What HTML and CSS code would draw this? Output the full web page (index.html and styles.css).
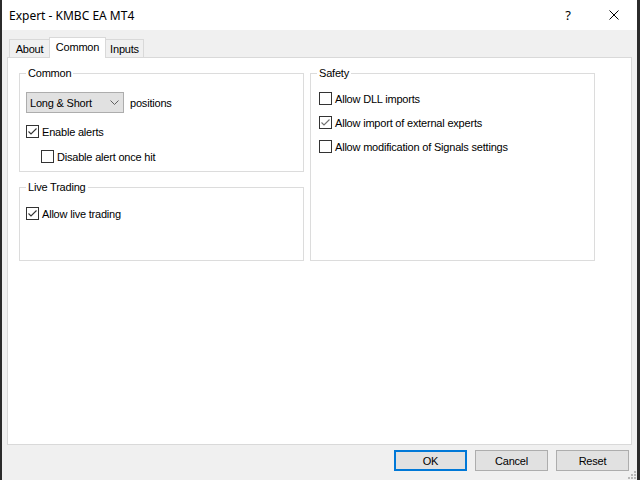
FILE: index.html
```html
<!DOCTYPE html>
<html lang="en">
<head>
    <meta charset="UTF-8">
    <title>Expert - KMBC EA MT4</title>
    <link rel="stylesheet" href="styles.css">
</head>
<body>
    <div class="window">
        <header class="titlebar">
            <span class="title">Expert - KMBC EA MT4</span>
            <span class="tb-btn tb-help">?</span>
            <span class="tb-btn tb-close">
                <svg width="10" height="10" viewBox="0 0 10 10"><path d="M0.5 0.5 L9.5 9.5 M9.5 0.5 L0.5 9.5" stroke="#000" stroke-width="1" fill="none"/></svg>
            </span>
        </header>
        <div class="client">
            <div class="tabs">
                <div class="tab tab-about">About</div>
                <div class="tab tab-common active">Common</div>
                <div class="tab tab-inputs">Inputs</div>
            </div>
            <div class="panel">
                <div class="groups">
                    <fieldset class="group g-common">
                        <legend>Common</legend>
                        <div class="combo-row">
                            <div class="combo">
                                <span>Long &amp; Short</span>
                                <svg class="chev" width="9" height="5" viewBox="0 0 9 5"><path d="M0.5 0.5 L4.5 4.5 L8.5 0.5" stroke="#606060" fill="none"/></svg>
                            </div>
                            <span class="combo-label">positions</span>
                        </div>
                        <label class="check first on"><span class="box"><svg width="11" height="11" viewBox="0 0 11 11"><path d="M1.5 5.5 L4 8 L9.5 2.5" stroke="#333" stroke-width="1.1" fill="none"/></svg></span>Enable alerts</label>
                        <label class="check sub"><span class="box"></span>Disable alert once hit</label>
                    </fieldset>

                    <fieldset class="group g-live">
                        <legend>Live Trading</legend>
                        <label class="check live on"><span class="box"><svg width="11" height="11" viewBox="0 0 11 11"><path d="M1.5 5.5 L4 8 L9.5 2.5" stroke="#333" stroke-width="1.1" fill="none"/></svg></span>Allow live trading</label>
                    </fieldset>

                    <fieldset class="group g-safety">
                        <legend>Safety</legend>
                        <label class="check first"><span class="box"></span>Allow DLL imports</label>
                        <label class="check"><span class="box"><svg width="11" height="11" viewBox="0 0 11 11"><path d="M1.5 5.5 L4 8 L9.5 2.5" stroke="#707070" stroke-width="1.1" fill="none"/></svg></span>Allow import of external experts</label>
                        <label class="check"><span class="box"></span>Allow modification of Signals settings</label>
                    </fieldset>
                </div>
            </div>
            <div class="buttons">
                <button class="btn default">OK</button>
                <button class="btn">Cancel</button>
                <button class="btn">Reset</button>
            </div>
        </div>
        <!-- size grip -->
        <svg class="grip" width="8" height="8" viewBox="0 0 8 8">
            <rect x="6" y="0" width="2" height="2" fill="#b8b8b8"/>
            <rect x="3" y="3" width="2" height="2" fill="#b8b8b8"/>
            <rect x="6" y="3" width="2" height="2" fill="#b8b8b8"/>
            <rect x="0" y="6" width="2" height="2" fill="#b8b8b8"/>
            <rect x="3" y="6" width="2" height="2" fill="#b8b8b8"/>
            <rect x="6" y="6" width="2" height="2" fill="#b8b8b8"/>
        </svg>
    </div>
</body>
</html>
```

FILE: styles.css
```css
body {
    margin: 0;
    background: #2b2b2b;
    font-family: "Liberation Sans", Arial, sans-serif;
    font-size: 11px;
    letter-spacing: -0.2px;
    color: #000;
}
.window {
    position: relative;
    width: 635px;
    height: 480px;
    margin-left: 2px;
    background: #f0f0f0;
    display: flex;
    flex-direction: column;
}
.titlebar {
    height: 30px;
    background: #fff;
    display: flex;
    align-items: center;
    padding-left: 7px;
    font-family: "Noto Sans", "Open Sans", sans-serif;
    font-size: 12px;
    letter-spacing: 0;
}
.title {
    flex: 1;
}
.tb-btn {
    width: 46px;
    height: 30px;
    display: flex;
    align-items: center;
    justify-content: center;
}
.tb-help {
    font-size: 13px;
}
.client {
    padding: 7px 5px 0 5px;
    display: flex;
    flex-direction: column;
}

/* tab strip */
.tabs {
    display: flex;
    align-items: flex-start;
    height: 21px;
    margin-bottom: -1px;
    padding-left: 2px;
    position: relative;
    z-index: 1;
}
.tab {
    box-sizing: border-box;
    height: 18px;
    margin-top: 2px;
    border: 1px solid #d9d9d9;
    border-bottom: none;
    background: #f0f0f0;
    display: flex;
    align-items: center;
    justify-content: center;
    padding-top: 1px;
}
.tab + .tab {
    margin-left: -1px;
}
.tab-about { width: 41px; }
.tab-common { width: 57px; }
.tab-inputs { width: 39px; }
.tab.active {
    height: 21px;
    margin-top: 0;
    background: #fff;
    padding-top: 0;
    padding-bottom: 2px;
    position: relative;
    z-index: 2;
}
.panel {
    box-sizing: border-box;
    height: 388px;
    background: #fff;
    border: 1px solid #d9d9d9;
    padding: 8px 0 0 11px;
}

/* group boxes */
.groups {
    display: grid;
    grid-template-columns: 285px 285px;
    grid-template-rows: 106px 81px;
    column-gap: 6px;
    row-gap: 8px;
}
.group {
    margin: 0;
    min-width: 0;
    border: 1px solid #dcdcdc;
    padding: 0 6px;
}
.group legend {
    padding: 0 2px;
    line-height: 14px;
}
.g-safety {
    grid-column: 2;
    grid-row: 1 / span 2;
    padding: 0 8px;
}
.g-safety legend {
    margin-left: -2px;
}
.combo-row {
    display: flex;
    align-items: center;
    margin-top: 12px;
}
.combo {
    box-sizing: border-box;
    width: 98px;
    height: 21px;
    border: 1px solid #adadad;
    background: #e1e1e1;
    display: flex;
    align-items: center;
    padding-left: 3px;
}
.chev {
    margin-left: auto;
    margin-right: 4px;
}
.combo-label {
    margin-left: 6px;
}
.check {
    display: flex;
    align-items: center;
    height: 17px;
    margin-top: 8px;
}
.check.first {
    margin-top: 10px;
}
.check.live {
    margin-top: 11px;
}
.check.sub {
    margin-left: 15px;
}
.g-safety .check + .check {
    margin-top: 7px;
}
.box {
    box-sizing: border-box;
    width: 13px;
    height: 13px;
    border: 1px solid #333;
    background: #fff;
    margin-right: 3px;
    display: flex;
    flex-shrink: 0;
}

/* dialog buttons */
.buttons {
    display: flex;
    justify-content: flex-end;
    gap: 8px;
    margin-top: 5px;
    margin-right: 3px;
}
.btn {
    box-sizing: border-box;
    width: 73px;
    height: 21px;
    border: 1px solid #adadad;
    background: #e1e1e1;
    font-family: "Liberation Sans", Arial, sans-serif;
    font-size: 11px;
    letter-spacing: -0.2px;
    color: #000;
    padding: 0;
}
.btn.default {
    border: 2px solid #0078d7;
}
.grip {
    position: absolute;
    right: 1px;
    bottom: 1px;
}
```
